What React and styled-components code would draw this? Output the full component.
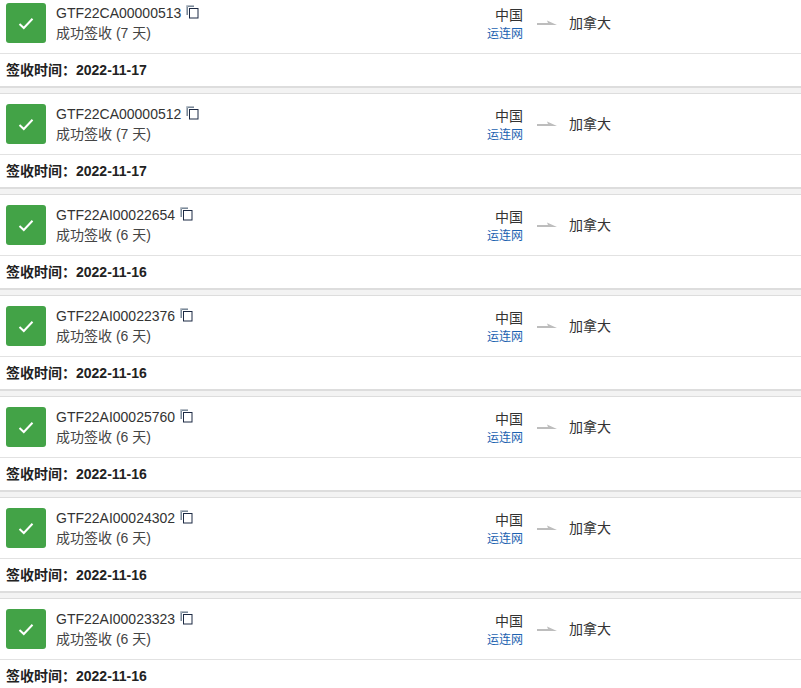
import React from 'react'
import styled, { createGlobalStyle } from 'styled-components'

const shipments = [
  { id: 'GTF22CA00000513', days: 7, date: '2022-11-17' },
  { id: 'GTF22CA00000512', days: 7, date: '2022-11-17' },
  { id: 'GTF22AI00022654', days: 6, date: '2022-11-16' },
  { id: 'GTF22AI00022376', days: 6, date: '2022-11-16' },
  { id: 'GTF22AI00025760', days: 6, date: '2022-11-16' },
  { id: 'GTF22AI00024302', days: 6, date: '2022-11-16' },
  { id: 'GTF22AI00023323', days: 6, date: '2022-11-16' },
]

const GlobalStyle = createGlobalStyle`
  html, body {
    margin: 0;
    background: #f3f3f3;
    overflow: hidden;
  }
  body {
    font-family: "Liberation Sans", "Noto Sans CJK SC", sans-serif;
    font-size: 14px;
    color: #333;
  }
`

const List = styled.div`
  height: 696px;
  overflow: hidden;
  margin-top: -8px;
`

const Card = styled.div`
  background: #fff;
  border-top: 1px solid #ddd;
  border-bottom: 2px solid #ddd;
  margin-bottom: 5px;
`

const Main = styled.div`
  display: flex;
  align-items: center;
  height: 60px;
  padding: 0 0 0 6px;
  border-bottom: 1px solid #e2e2e2;
`

const StatusBox = styled.div`
  width: 40px;
  height: 40px;
  flex: none;
  background: #43a347;
  border-radius: 3px;
  display: flex;
  align-items: center;
  justify-content: center;
  margin-right: 10px;
`

const Info = styled.div`
  width: 401px;
  flex: none;
  line-height: 20px;
  padding-bottom: 1px;
`

const TrackNo = styled.div`
  display: flex;
  align-items: center;
  gap: 5px;
`

const Status = styled.div`
  color: #444;
`

const Route = styled.div`
  display: flex;
  align-items: center;
`

const Origin = styled.div`
  width: 66px;
  text-align: right;
  line-height: 20px;
  padding-top: 2px;
`

const Carrier = styled.a`
  display: block;
  font-size: 12px;
  line-height: 18px;
  color: #1c62b0;
`

const Arrow = styled.svg`
  margin: 0 12px 1px 14px;
  flex: none;
`

const Destination = styled.div`
  color: #333;
  margin-bottom: 2px;
`

const Footer = styled.div`
  height: 32px;
  line-height: 33px;
  padding-left: 6px;
  font-size: 14px;
  font-weight: bold;
  color: #222;
`

const CopySvg = styled.svg`
  margin-top: -2px;
`

function CopyIcon() {
  return (
    <CopySvg width="13" height="14" viewBox="0 0 13 14" fill="none">
      <path d="M1.5 10V1.5H8" stroke="#7a8a9a" strokeWidth="1" />
      <path d="M0.5 10V0.5H8" stroke="#b5bcc4" strokeWidth="1" />
      <rect x="3.5" y="3.5" width="8.5" height="9.5" stroke="#1d2a44" strokeWidth="1" />
    </CopySvg>
  )
}

function Check() {
  return (
    <svg width="16" height="13" viewBox="0 0 16 13" fill="none">
      <path d="M1.5 7 L5.8 11 L14.5 1.8" stroke="#fff" strokeWidth="2" />
    </svg>
  )
}

function ShipmentCard({ id, days, date }) {
  return (
    <Card>
      <Main>
        <StatusBox>
          <Check />
        </StatusBox>
        <Info>
          <TrackNo>
            {id}
            <CopyIcon />
          </TrackNo>
          <Status>成功签收 ({days} 天)</Status>
        </Info>
        <Route>
          <Origin>
            中国
            <Carrier>运连网</Carrier>
          </Origin>
          <Arrow width="20" height="6" viewBox="0 0 20 6">
            <path d="M0 3 H11 L10 0.5 L20 5 H0 Z" fill="#bdbdbd" />
          </Arrow>
          <Destination>加拿大</Destination>
        </Route>
      </Main>
      <Footer>签收时间：{date}</Footer>
    </Card>
  )
}

export default function App() {
  return (
    <>
      <GlobalStyle />
      <List>
        {shipments.map((s) => (
          <ShipmentCard key={s.id} {...s} />
        ))}
      </List>
    </>
  )
}
